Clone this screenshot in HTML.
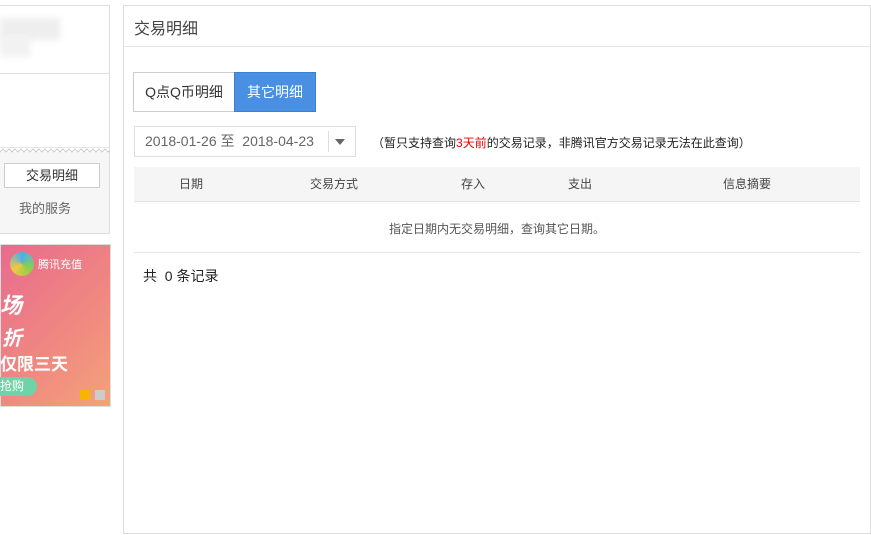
<html><head><style>
*{margin:0;padding:0;box-sizing:border-box}
body{width:871px;height:535px;background:#fff;font-family:"Liberation Sans","Noto Sans CJK SC",sans-serif;position:relative;overflow:hidden;color:#333}
.a{position:absolute}
</style></head><body>
<div class="a" style="left:-1px;top:5px;width:111px;height:229px;border:1px solid #ddd;background:#fff"></div>
<div class="a" style="left:0;top:73px;width:109px;height:1px;background:#ddd"></div>
<div class="a" style="left:0;top:18px;width:60px;height:22px;background:#eee;filter:blur(3px)"></div>
<div class="a" style="left:0;top:35px;width:30px;height:22px;background:#f2f2f2;filter:blur(3px)"></div>
<div class="a" style="left:0;top:152px;width:109px;height:81px;background:#f6f6f6"></div>
<svg class="a" style="left:0;top:147px" width="110" height="8"><polyline fill="#fff" stroke="#ccc" points="0,5 3,2 6,5 9,2 12,5 15,2 18,5 21,2 24,5 27,2 30,5 33,2 36,5 39,2 42,5 45,2 48,5 51,2 54,5 57,2 60,5 63,2 66,5 69,2 72,5 75,2 78,5 81,2 84,5 87,2 90,5 93,2 96,5 99,2 102,5 105,2 108,5 110,3 110,0 0,0"/></svg>
<div class="a" style="left:4px;top:163px;width:96px;height:25px;border:1px solid #ccc;background:#fff;font-size:13px;line-height:23px;text-align:center;color:#333">交易明细</div>
<div class="a" style="left:19px;top:198px;font-size:13px;color:#666">我的服务</div>
<div class="a" style="left:0;top:244px;width:111px;height:163px;background:linear-gradient(135deg,#e86a8e,#f08a80 60%,#f3a27a);border:1px solid #ddd"></div>
<div class="a" style="left:10px;top:252px;width:24px;height:24px;border-radius:50%;background:conic-gradient(#4ab0e8,#8bd14a,#f4c542,#4ab0e8);"></div>
<div class="a" style="left:38px;top:256px;font-size:11px;color:#fff">腾讯充值</div>
<div class="a" style="left:0;top:288px;font-size:22px;font-weight:bold;font-style:italic;color:#fff">场</div>
<div class="a" style="left:2px;top:322px;font-size:20px;font-weight:bold;font-style:italic;color:#fff">折</div>
<div class="a" style="left:0;top:350px;font-size:17px;font-weight:bold;color:#fff">仅限三天</div>
<div class="a" style="left:-10px;top:377px;width:47px;height:19px;border-radius:10px;background:#6fd3a8;color:#fff;font-size:12px;line-height:19px;padding-left:10px">抢购</div>
<div class="a" style="left:80px;top:390px;width:10px;height:10px;background:#f6b500"></div>
<div class="a" style="left:95px;top:390px;width:10px;height:10px;background:#ccc"></div>

<div class="a" style="left:123px;top:5px;width:748px;height:529px;border:1px solid #ddd"></div>
<div class="a" style="left:124px;top:46px;width:746px;height:1px;background:#e5e5e5"></div>
<div class="a" style="left:134px;top:15px;font-size:16px;color:#444">交易明细</div>
<div class="a" style="left:133px;top:72px;width:102px;height:40px;border:1px solid #ccc;font-size:14px;line-height:38px;text-align:center;color:#333">Q点Q币明细</div>
<div class="a" style="left:234px;top:72px;width:82px;height:40px;background:#4a90e2;border:1px solid #3a7fd0;font-size:14px;line-height:38px;text-align:center;color:#fff">其它明细</div>
<div class="a" style="left:134px;top:126px;width:222px;height:31px;border:1px solid #ddd;font-size:14px;line-height:29px;padding-left:10px;color:#666">2018-01-26 至&nbsp; 2018-04-23</div>
<div class="a" style="left:328px;top:131px;width:1px;height:21px;background:#ddd"></div>
<div class="a" style="left:335px;top:139px;border-left:5px solid transparent;border-right:5px solid transparent;border-top:6px solid #666"></div>
<div class="a" style="left:372px;top:134px;font-size:12px;color:#222">（暂只支持查询<span style="color:#e00">3天前</span>的交易记录，非腾讯官方交易记录无法在此查询）</div>
<div class="a" style="left:134px;top:167px;width:726px;height:35px;background:#f5f5f5;border-bottom:1px solid #e5e5e5;font-size:12px;color:#444;line-height:35px">
<span class="a" style="left:45px">日期</span><span class="a" style="left:176px">交易方式</span><span class="a" style="left:327px">存入</span><span class="a" style="left:434px">支出</span><span class="a" style="left:589px">信息摘要</span></div>
<div class="a" style="left:389px;top:220px;font-size:12px;color:#555">指定日期内无交易明细，查询其它日期。</div>
<div class="a" style="left:134px;top:252px;width:726px;height:1px;background:#e5e5e5"></div>
<div class="a" style="left:143px;top:266px;font-size:14px;color:#222">共&nbsp; 0 条记录</div>
</body></html>
